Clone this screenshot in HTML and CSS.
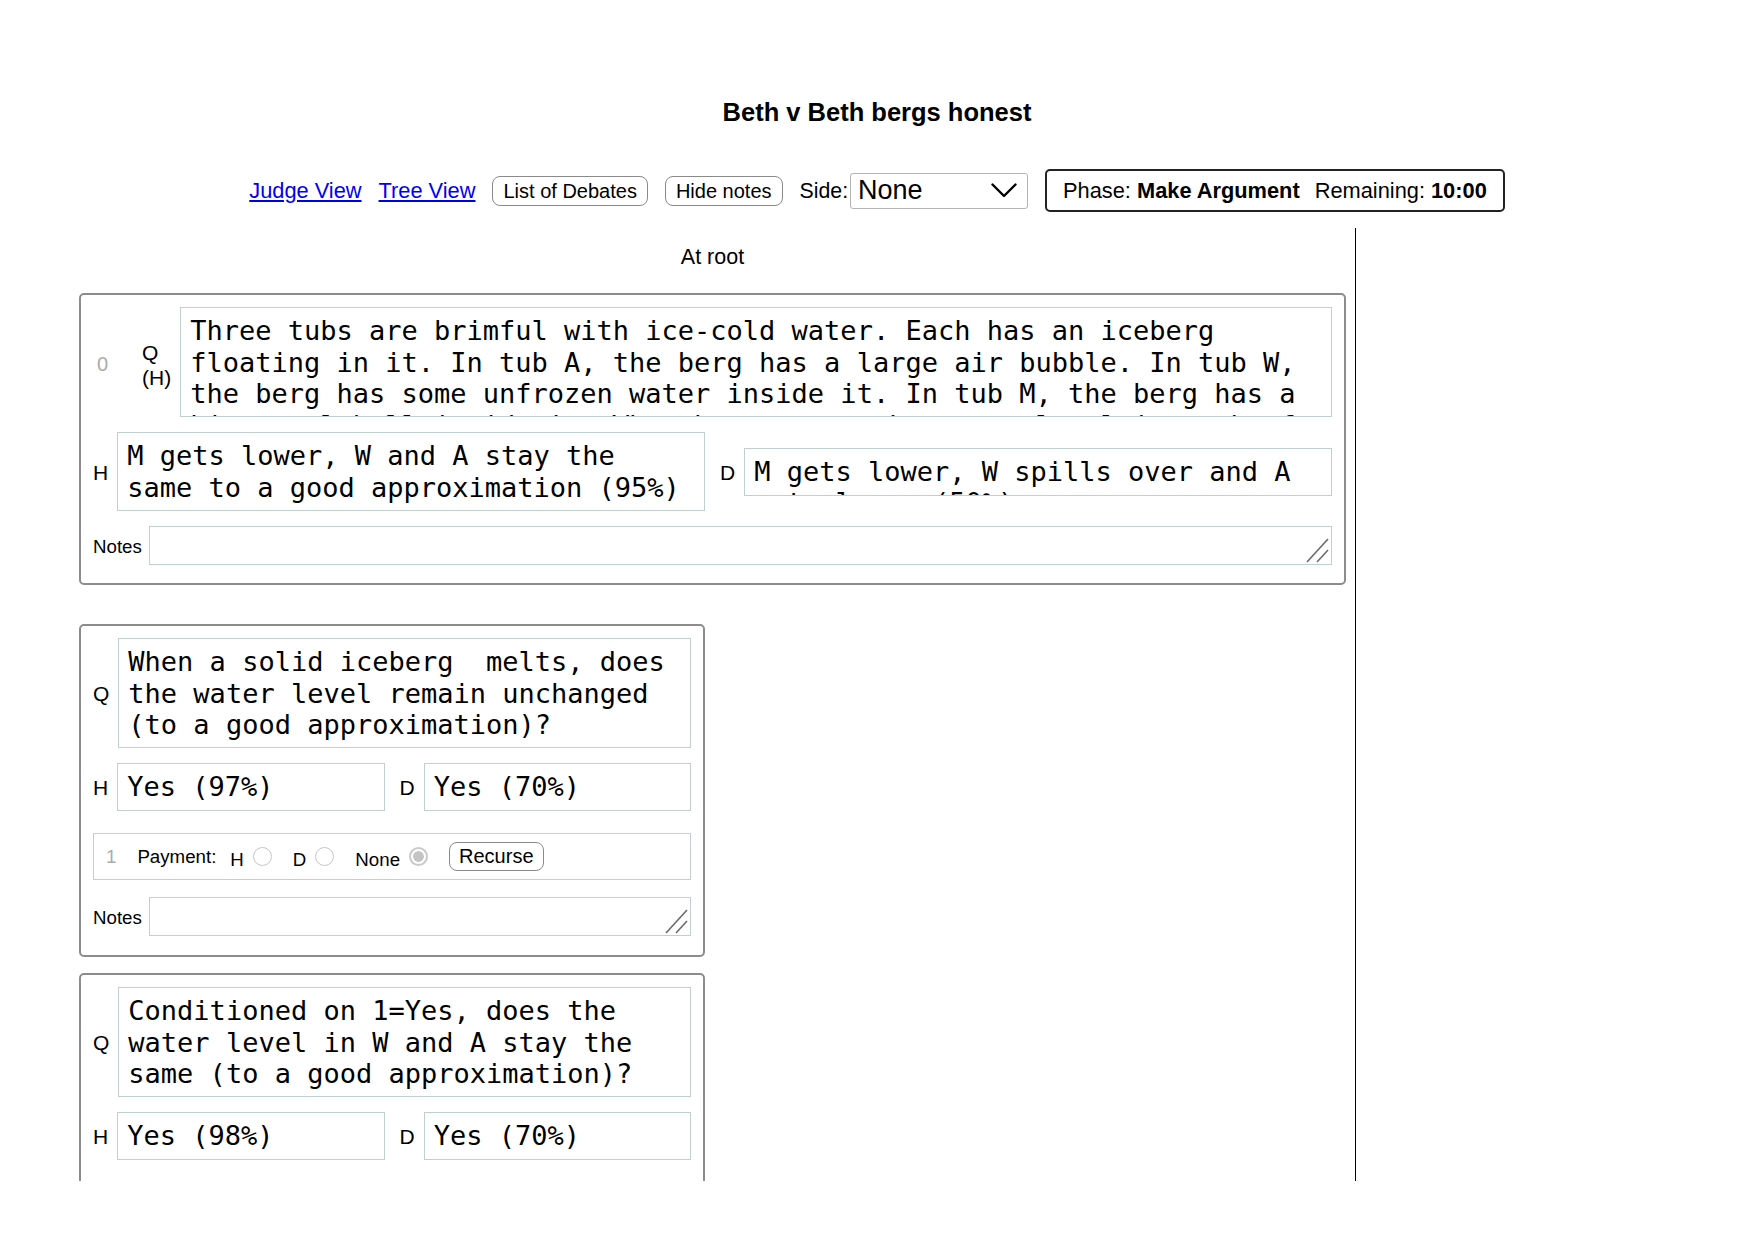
FILE: index.html
```html
<!DOCTYPE html>
<html>
<head>
<meta charset="utf-8">
<title>Beth v Beth bergs honest</title>
<link rel="stylesheet" href="styles.css">
</head>
<body>
<div class="page">
  <h1 class="title">Beth v Beth bergs honest</h1>
  <nav class="toolbar">
    <a href="#" class="nav-link">Judge View</a>
    <a href="#" class="nav-link">Tree View</a>
    <button class="btn">List of Debates</button>
    <button class="btn">Hide notes</button>
    <span class="side">
      <span class="side-label">Side:</span>
      <span class="select"><span>None</span><svg class="chev" width="26" height="15" viewBox="0 0 26 15"><polyline points="1.5,1.5 13,13 24.5,1.5" fill="none" stroke="#000" stroke-width="2.4" stroke-linecap="round" stroke-linejoin="round"/></svg></span>
    </span>
    <div class="phase"><span>Phase: <b>Make Argument</b></span><span class="rem">Remaining: <b>10:00</b></span></div>
  </nav>

  <div class="main">
    <div class="tree">
      <div class="location">At root</div>

      <div class="card card-root">
        <div class="row">
          <span class="num">0</span>
          <span class="lbl lbl-qh">Q<br>(H)</span>
          <div class="box h110">Three tubs are brimful with ice-cold water. Each has an iceberg floating in it. In tub A, the berg has a large air bubble. In tub W, the berg has some unfrozen water inside it. In tub M, the berg has a big metal ball inside it. What happens to the water level in each of the tubs when the bergs melt?</div>
        </div>
        <div class="row ans-row">
          <div class="half"><span class="lbl">H</span><div class="box h79">M gets lower, W and A stay the same to a good approximation (95%)</div></div>
          <div class="half"><span class="lbl">D</span><div class="box h48">M gets lower, W spills over and A gets lower (50%)</div></div>
        </div>
        <div class="row notes-row">
          <span class="notes-lbl">Notes</span>
          <div class="notes-box"><svg class="grip" width="24" height="26" viewBox="0 0 24 26"><line x1="2" y1="25" x2="23" y2="2" stroke="#6a6a6a" stroke-width="1.6"/><line x1="12" y1="25" x2="23" y2="13" stroke="#6a6a6a" stroke-width="1.6"/></svg></div>
        </div>
      </div>

      <div class="children">
        <div class="card card-child">
          <div class="row">
            <span class="lbl">Q</span>
            <div class="box h110">When a solid iceberg  melts, does the water level remain unchanged (to a good approximation)?</div>
          </div>
          <div class="row ans-row">
            <div class="half"><span class="lbl">H</span><div class="box h48">Yes (97%)</div></div>
            <div class="half"><span class="lbl">D</span><div class="box h48">Yes (70%)</div></div>
          </div>
          <div class="pay">
            <span class="pay-num">1</span>
            <span class="pay-label">Payment:</span>
            <span class="opt"><span class="opt-text">H</span><span class="radio"></span></span>
            <span class="opt"><span class="opt-text">D</span><span class="radio"></span></span>
            <span class="opt"><span class="opt-text">None</span><span class="radio radio-on"></span></span>
            <button class="btn btn-small">Recurse</button>
          </div>
          <div class="row notes-row notes-after-pay">
            <span class="notes-lbl">Notes</span>
            <div class="notes-box"><svg class="grip" width="24" height="26" viewBox="0 0 24 26"><line x1="2" y1="25" x2="23" y2="2" stroke="#6a6a6a" stroke-width="1.6"/><line x1="12" y1="25" x2="23" y2="13" stroke="#6a6a6a" stroke-width="1.6"/></svg></div>
          </div>
        </div>

        <div class="card card-child">
          <div class="row">
            <span class="lbl">Q</span>
            <div class="box h110">Conditioned on 1=Yes, does the water level in W and A stay the same (to a good approximation)?</div>
          </div>
          <div class="row ans-row">
            <div class="half"><span class="lbl">H</span><div class="box h48">Yes (98%)</div></div>
            <div class="half"><span class="lbl">D</span><div class="box h48">Yes (70%)</div></div>
          </div>
          <div class="pay">
            <span class="pay-num">2</span>
            <span class="pay-label">Payment:</span>
            <span class="opt"><span class="opt-text">H</span><span class="radio"></span></span>
            <span class="opt"><span class="opt-text">D</span><span class="radio"></span></span>
            <span class="opt"><span class="opt-text">None</span><span class="radio radio-on"></span></span>
            <button class="btn btn-small">Recurse</button>
          </div>
          <div class="row notes-row notes-after-pay">
            <span class="notes-lbl">Notes</span>
            <div class="notes-box"></div>
          </div>
        </div>
      </div>
    </div>
    <div class="side-panel"></div>
  </div>
</div>
</body>
</html>
```

FILE: styles.css
```css
* { box-sizing: border-box; }
html, body { margin: 0; padding: 0; background: #fff; }
body { font-family: "Liberation Sans", Arial, sans-serif; color: #000; }

.page { height: 1240px; }

.title {
  margin: 0;
  padding-top: 97px;
  font-size: 25.5px;
  line-height: 30px;
  font-weight: bold;
  text-align: center;
}

.toolbar {
  margin-top: 42px;
  height: 43px;
  display: flex;
  justify-content: center;
  align-items: center;
  gap: 17px;
}
.nav-link { font-size: 21.8px; color: #0000ee; text-decoration: underline; padding-top: 1px; }
.btn {
  font-family: "Liberation Sans", Arial, sans-serif;
  font-size: 20px;
  height: 30px;
  line-height: 28px;
  padding: 0 10px;
  border: 1px solid #8a8a8a;
  border-radius: 8px;
  background: #fff;
  color: #000;
}
.side { display: flex; align-items: center; gap: 2px; }
.side-label { font-size: 21.3px; padding-top: 2px; }
.select {
  width: 178px;
  height: 36px;
  border: 1px solid #b4b4b4;
  border-radius: 3px;
  display: flex;
  align-items: center;
  justify-content: space-between;
  padding: 0 10px 0 7px;
  font-size: 27px;
}
.chev { display: block; }
.phase {
  height: 43px;
  border: 2px solid #222;
  border-radius: 5px;
  padding: 0 16px;
  display: flex;
  align-items: center;
  font-size: 21.8px;
  white-space: nowrap;
}
.rem { margin-left: 15px; }

.main {
  display: flex;
  margin-top: 16px;
  margin-left: 79px;
  height: 953px;
  overflow: hidden;
}
.tree { width: 1276px; flex: none; padding-right: 9px; }
.side-panel { flex: 1; border-left: 1px solid #000; }

.location {
  margin-top: 16px;
  text-align: center;
  font-size: 21.5px;
  line-height: 26px;
}

.card {
  border: 2px solid #8c8c8c;
  border-radius: 5px;
  padding: 12px 12px 18px;
}
.card-root { margin-top: 23px; }
.children {
  margin-top: 39px;
  display: flex;
  flex-direction: column;
  gap: 16px;
}
.card-child { width: 626px; padding-bottom: 19px; }

.row { display: flex; align-items: center; }
.ans-row { margin-top: 15px; gap: 15px; }
.half { flex: 1; display: flex; align-items: center; gap: 9px; min-width: 0; }

.num { color: #ababab; font-size: 20px; width: 49px; padding-left: 4px; padding-top: 4px; flex: none; }
.lbl { font-size: 21px; flex: none; padding-top: 2px; }
.row > .lbl { margin-right: 9px; }
.lbl-qh { line-height: 25px; padding-top: 6px; }

.box {
  flex: 1;
  min-width: 0;
  border: 1px solid #c2cfcf;
  padding: 7px 9px;
  font-family: "DejaVu Sans Mono", "Liberation Mono", monospace;
  font-size: 27px;
  line-height: 31.5px;
  overflow: hidden;
  white-space: pre-wrap;
  word-wrap: break-word;
}
.h110 { height: 110px; }
.h79 { height: 79px; }
.h48 { height: 48px; }

.notes-row { margin-top: 15px; gap: 7px; }
.notes-after-pay { margin-top: 17px; }
.notes-lbl { font-size: 18.7px; flex: none; padding-top: 2px; }
.notes-box {
  flex: 1;
  height: 39px;
  border: 1px solid #c2cfcf;
  display: flex;
  justify-content: flex-end;
  align-items: flex-end;
  padding: 0 2px 1px 0;
}
.grip { display: block; }

.pay {
  margin-top: 22px;
  height: 47px;
  border: 1px solid #c2cfcf;
  display: flex;
  align-items: center;
  padding-left: 12px;
  font-size: 18.7px;
}
.pay-num { color: #ababab; margin-right: 21px; }
.pay-label { margin-right: 14px; }
.opt { display: flex; align-items: center; gap: 9px; margin-right: 21px; }
.opt-text { padding-top: 7px; }
.radio {
  width: 19px;
  height: 19px;
  border-radius: 50%;
  border: 1px solid #c6c6c6;
  background: #fff;
  display: block;
}
.radio-on {
  border: 2px solid #c9c9c9;
  background: radial-gradient(circle, #c4c4c4 0 5px, #fff 5.6px);
}
.btn-small { height: 29px; line-height: 27px; padding: 0 9px; }
```
